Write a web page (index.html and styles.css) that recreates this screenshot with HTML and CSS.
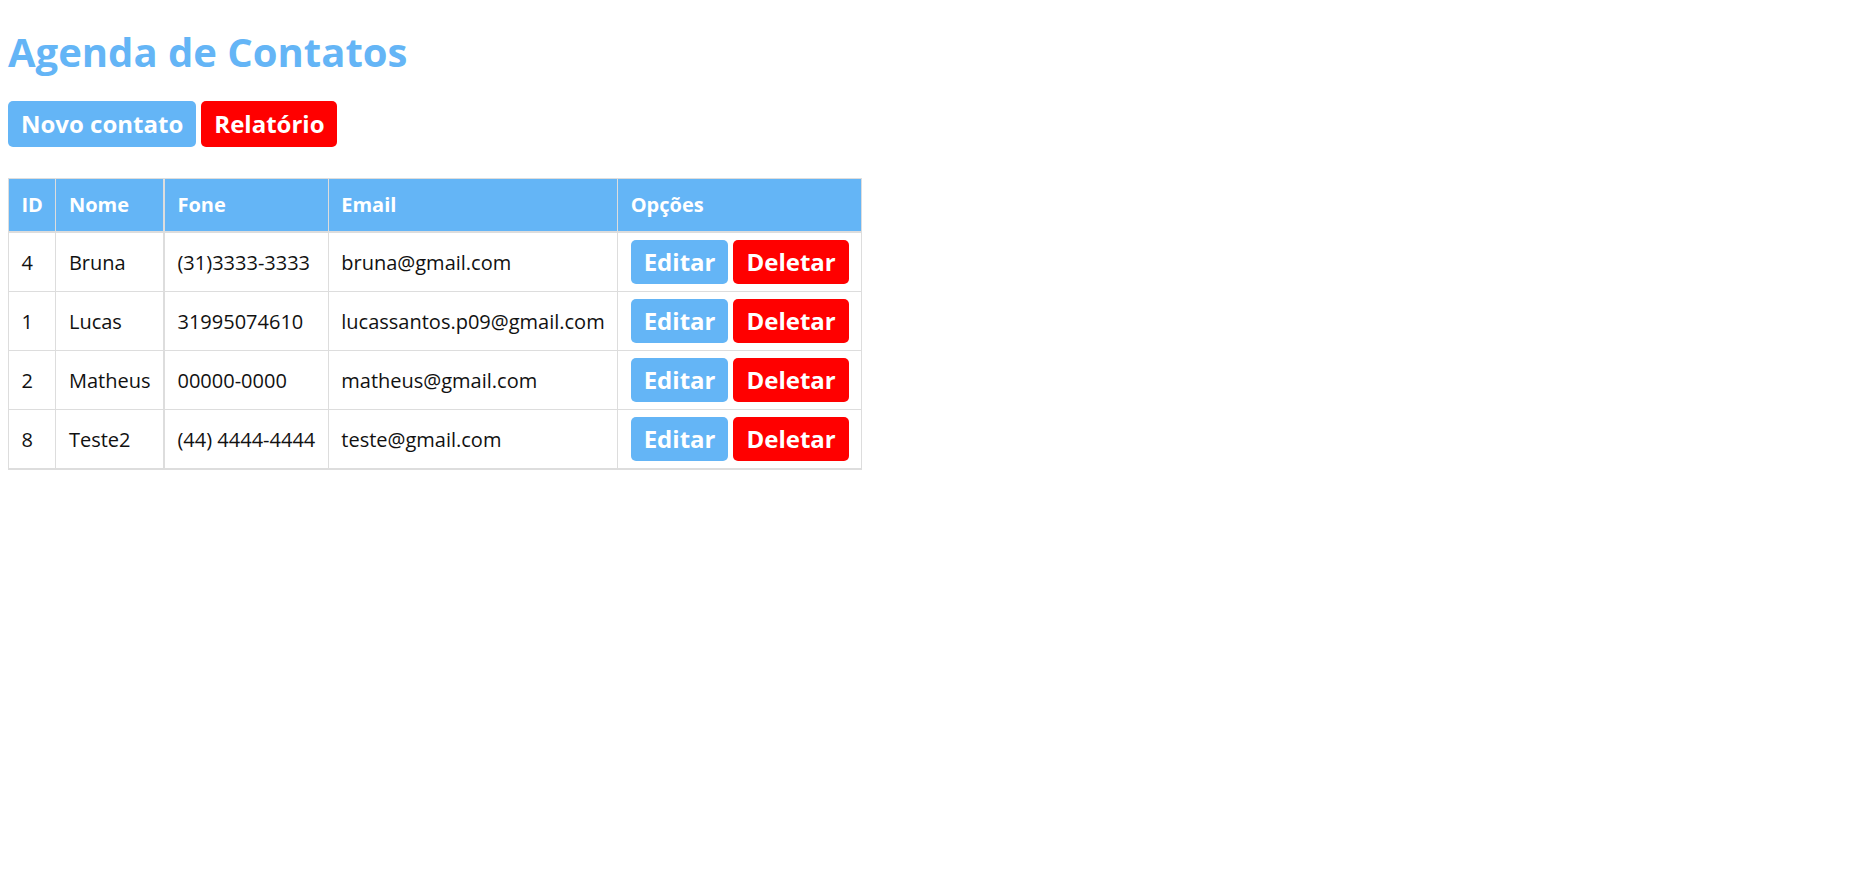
FILE: index.html
```html
<!DOCTYPE html>
<html lang="pt-BR">
<head>
<meta charset="utf-8">
<title>Agenda de Contatos</title>
<link rel="stylesheet" href="styles.css">
</head>
<body>
<div class="page">
  <h1 class="title">Agenda de Contatos</h1>
  <div class="actions">
    <a class="btn btn-blue" href="#">Novo contato</a>
    <a class="btn btn-red" href="#">Relatório</a>
  </div>
  <table class="contacts">
    <thead>
      <tr><th>ID</th><th>Nome</th><th>Fone</th><th>Email</th><th>Opções</th></tr>
    </thead>
    <tbody>
      <tr><td>4</td><td>Bruna</td><td>(31)3333-3333</td><td>bruna@gmail.com</td><td><div class="opts"><a class="btn btn-sm btn-blue" href="#">Editar</a><a class="btn btn-sm btn-red" href="#">Deletar</a></div></td></tr>
      <tr><td>1</td><td>Lucas</td><td>31995074610</td><td>lucassantos.p09@gmail.com</td><td><div class="opts"><a class="btn btn-sm btn-blue" href="#">Editar</a><a class="btn btn-sm btn-red" href="#">Deletar</a></div></td></tr>
      <tr><td>2</td><td>Matheus</td><td>00000-0000</td><td>matheus@gmail.com</td><td><div class="opts"><a class="btn btn-sm btn-blue" href="#">Editar</a><a class="btn btn-sm btn-red" href="#">Deletar</a></div></td></tr>
      <tr><td>8</td><td>Teste2</td><td>(44) 4444-4444</td><td>teste@gmail.com</td><td><div class="opts"><a class="btn btn-sm btn-blue" href="#">Editar</a><a class="btn btn-sm btn-red" href="#">Deletar</a></div></td></tr>
    </tbody>
  </table>
</div>
</body>
</html>
```
FILE: styles.css
```css
html, body {
  margin: 0;
  padding: 0;
  background: #fff;
}
body {
  font-family: "Open Sans", "DejaVu Sans", sans-serif;
  font-size: 20px;
  color: #111;
}
.page {
  padding: 8px;
}
.title {
  font-size: 40px;
  line-height: 48px;
  font-weight: 700;
  color: #64b5f6;
  margin: 20px 0 25px;
}
.actions {
  display: flex;
  gap: 5px;
  margin-bottom: 31px;
}
.btn {
  display: block;
  font-size: 24px;
  font-weight: 700;
  line-height: 46px;
  padding: 0 13px;
  color: #fff;
  text-decoration: none;
  border-radius: 5px;
}
.btn-sm {
  line-height: 44px;
}
.btn-blue {
  background: #64b5f6;
}
.btn-red {
  background: #ff0000;
}
.contacts {
  border-collapse: collapse;
  border: 1px solid #ddd;
  border-bottom: 2px solid #ddd;
}
.contacts th {
  background: #64b5f6;
  color: #fff;
  font-weight: 700;
  text-align: left;
  line-height: 27px;
  padding: 12px 12.5px 13px;
  border: 1px solid #ddd;
  border-top: none;
  border-bottom: 2px solid #ddd;
}
.contacts td {
  line-height: 27px;
  padding: 7px 12.5px;
  border: 1px solid #ddd;
  white-space: nowrap;
}
.contacts th:nth-child(2),
.contacts td:nth-child(2) {
  border-right: 2px solid #ddd;
}
.opts {
  display: flex;
  gap: 5px;
}
```
